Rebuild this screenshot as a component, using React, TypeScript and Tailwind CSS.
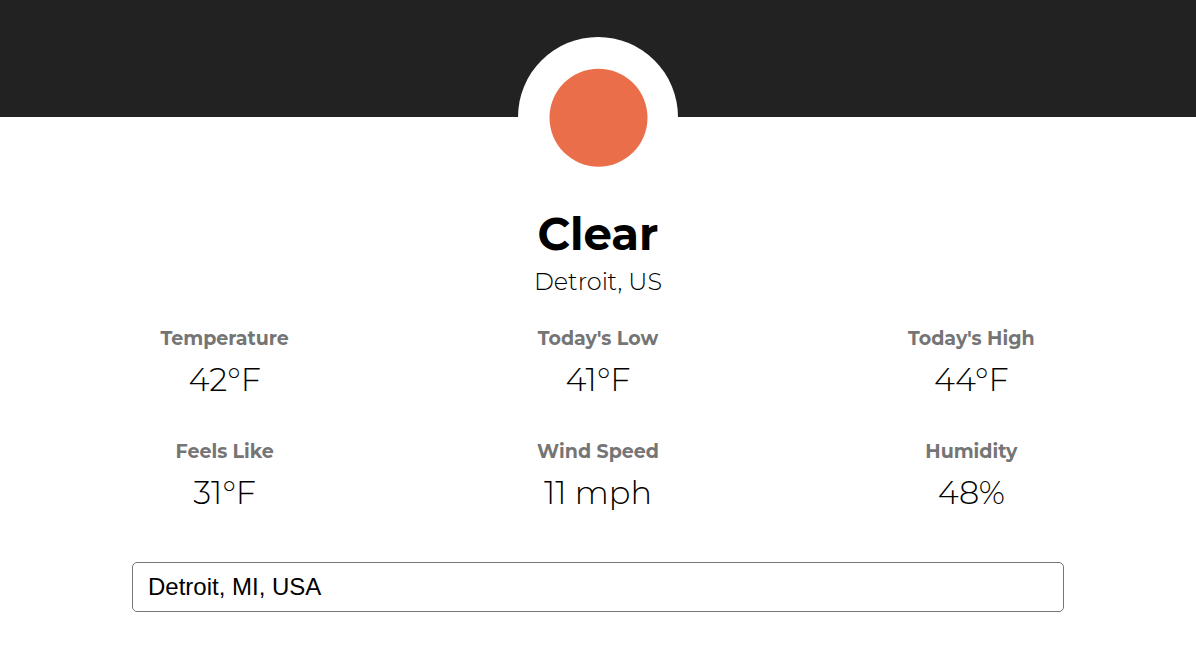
const stats = [
  { label: "Temperature", value: "42°F" },
  { label: "Today's Low", value: "41°F" },
  { label: "Today's High", value: "44°F" },
  { label: "Feels Like", value: "31°F" },
  { label: "Wind Speed", value: "11 mph" },
  { label: "Humidity", value: "48%" },
];

function ClearIcon() {
  return (
    <div className="flex size-40 items-center justify-center rounded-full bg-white">
      <svg viewBox="0 0 100 100" className="size-[100px]" role="img" aria-label="Clear sky">
        <circle cx="50.5" cy="50.7" r="49" fill="#eb6e4b" />
      </svg>
    </div>
  );
}

export default function App() {
  return (
    <div className="min-h-screen bg-white font-['Montserrat','Inter',sans-serif] text-black">
      <header className="flex h-[117px] justify-center bg-[#222222] pt-[37px]">
        <ClearIcon />
      </header>
      <main className="px-[38px] pt-[89px]">
        <div className="text-center">
          <h1 className="text-[45px] leading-[56px] font-bold">Clear</h1>
          <p className="text-2xl leading-10 font-light">Detroit, US</p>
        </div>
        <dl className="mt-[21px] grid grid-cols-3 gap-y-[34px] text-center">
          {stats.map((s) => (
            <div key={s.label}>
              <dt className="text-[19px] leading-8 font-bold text-[#757575]">{s.label}</dt>
              <dd className="mt-0.5 text-[32px] leading-[45px] font-light">{s.value}</dd>
            </div>
          ))}
        </dl>
        <div className="mt-[47px] px-[94px]">
          <input
            type="text"
            aria-label="Location"
            defaultValue="Detroit, MI, USA"
            className="h-[50px] w-full rounded-[5px] border border-[#767676] bg-white px-[15px] font-['Liberation_Sans',sans-serif] text-2xl"
          />
        </div>
      </main>
    </div>
  );
}
